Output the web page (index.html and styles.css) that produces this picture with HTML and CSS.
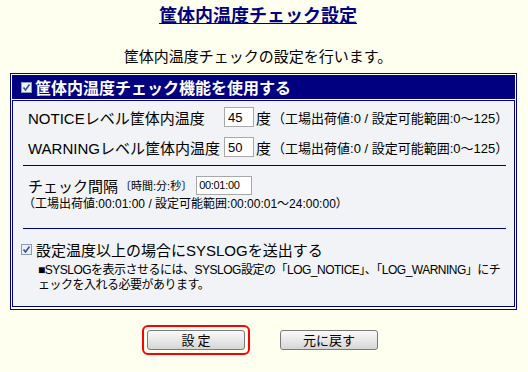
FILE: index.html
```html
<!DOCTYPE html>
<html lang="ja">

<head>
    <meta charset="UTF-8">
    <title>筐体内温度チェック設定</title>
    <link rel="stylesheet" href="styles.css">
</head>

<body>
    <div class="page">
        <h1 class="title"><a href="#">筐体内温度チェック設定</a></h1>
        <p class="lead">筐体内温度チェックの設定を行います。</p>

        <div class="panel">
            <div class="panel-head">
                <svg class="check" width="11" height="11" viewBox="0 0 11 11">
                    <rect x="0.5" y="0.5" width="10" height="10" fill="#eef0f6" stroke="#8a9ab8"/>
                    <path d="M2.5 5.5 L4.5 8 L8.5 2.5" fill="none" stroke="#2f4fa8" stroke-width="1.6"/>
                </svg>
                <span>筐体内温度チェック機能を使用する</span>
            </div>
            <div class="panel-body">
                <div class="levels">
                    <span class="label">NOTICEレベル筐体内温度</span>
                    <input class="num" type="text" value="45">
                    <span class="unit">度</span>
                    <span class="small wide">（工場出荷値:0 / 設定可能範囲:0～125）</span>

                    <span class="label">WARNINGレベル筐体内温度</span>
                    <input class="num" type="text" value="50">
                    <span class="unit">度</span>
                    <span class="small wide">（工場出荷値:0 / 設定可能範囲:0～125）</span>
                </div>

                <hr>

                <div class="interval">
                    <span class="label">チェック間隔</span>
                    <span class="tiny">〔時間:分:秒〕</span>
                    <input class="time" type="text" value="00:01:00">
                </div>
                <div class="small factory">（工場出荷値:00:01:00 / 設定可能範囲:00:00:01～24:00:00）</div>

                <hr>

                <div class="syslog">
                    <svg class="check" width="11" height="11" viewBox="0 0 11 11">
                        <rect x="0.5" y="0.5" width="10" height="10" fill="#eef0f6" stroke="#8a9ab8"/>
                        <path d="M2.5 5.5 L4.5 8 L8.5 2.5" fill="none" stroke="#2f4fa8" stroke-width="1.6"/>
                    </svg>
                    <span>設定温度以上の場合にSYSLOGを送出する</span>
                </div>
                <p class="note">■SYSLOGを表示させるには、SYSLOG設定の「LOG_NOTICE」、「LOG_WARNING」にチ<br>ェックを入れる必要があります。</p>
            </div>
        </div>

        <div class="buttons">
            <span class="focus"><button type="button">設 定</button></span>
            <button type="button">元に戻す</button>
        </div>
    </div>
</body>

</html>
```

FILE: styles.css
```css
body {
    margin: 0;
    background-color: #fffff0;
    font-family: "Liberation Sans", "Noto Sans CJK JP", sans-serif;
    color: #000;
}

.page {
    width: 528px;
}

.title {
    width: 516px;
    margin: 0;
    padding-top: 4px;
    font-size: 18px;
    line-height: 24px;
    text-align: center;
}

.title a {
    color: #000080;
}

.lead {
    width: 516px;
    margin: 19px 0 0;
    font-size: 15px;
    line-height: 20px;
    text-align: center;
}

.panel {
    width: 503px;
    margin: 6px 0 0 10px;
    padding: 1px 1px 2px;
    border: 1px solid #000080;
}

.panel-head {
    display: flex;
    align-items: center;
    gap: 3px;
    height: 24px;
    margin-bottom: 1px;
    padding-left: 9px;
    background-color: #000080;
    color: #fff;
    font-weight: bold;
    font-size: 16px;
}

.panel-body {
    height: 207px;
    padding: 1px 8px 0 10px;
    border: 1px solid #000080;
    background-color: #f1f3f6;
    box-sizing: border-box;
}

.levels {
    display: grid;
    grid-template-columns: 196px 30px auto 1fr;
    grid-auto-rows: 30px;
    align-items: center;
    padding-left: 5px;
}

.label {
    font-size: 15px;
    white-space: nowrap;
}

.unit {
    font-size: 15px;
    padding: 0 1px 0 2px;
}

.small {
    font-size: 12px;
    white-space: nowrap;
}

.small.wide {
    font-size: 13px;
}

.tiny {
    font-size: 11px;
    margin: 0 4px 0 2px;
}

input {
    height: 20px;
    padding: 0 3px;
    border: 1px solid #a8a8a8;
    background-color: #fff;
    font-family: "Liberation Sans", sans-serif;
    font-size: 13px;
    box-sizing: border-box;
}

.num {
    width: 30px;
}

.time {
    width: 56px;
    height: 19px;
    padding: 0 2px;
    font-size: 11px;
    letter-spacing: -0.3px;
}

hr {
    height: 1px;
    margin: 3px 0 0;
    border: none;
    background-color: #000080;
}

.interval {
    display: flex;
    align-items: center;
    height: 22px;
    margin-top: 8px;
    padding-left: 5px;
}

.factory {
    line-height: 16px;
    margin-bottom: 16px;
}

.factory + hr {
    margin-top: 0;
}

.syslog {
    display: flex;
    align-items: center;
    gap: 4px;
    height: 22px;
    margin: 9px 0 0 -2px;
    font-size: 15px;
}

.note {
    margin: 3px 0 0 15px;
    font-size: 12px;
    line-height: 15px;
    letter-spacing: -0.5px;
    white-space: nowrap;
}

.buttons {
    display: flex;
    justify-content: center;
    align-items: center;
    gap: 30px;
    width: 520px;
    margin-top: 15px;
}

.focus {
    display: inline-block;
    padding: 3px;
    border: 2px solid #ff0000;
    border-radius: 6px;
}

button {
    display: block;
    width: 98px;
    height: 20px;
    padding: 0;
    border: 1px solid #7a7a7a;
    border-radius: 3px;
    background: linear-gradient(#fafafa, #d6d6d6);
    font-family: "Noto Sans CJK JP", sans-serif;
    font-size: 13px;
    line-height: 18px;
}
```
